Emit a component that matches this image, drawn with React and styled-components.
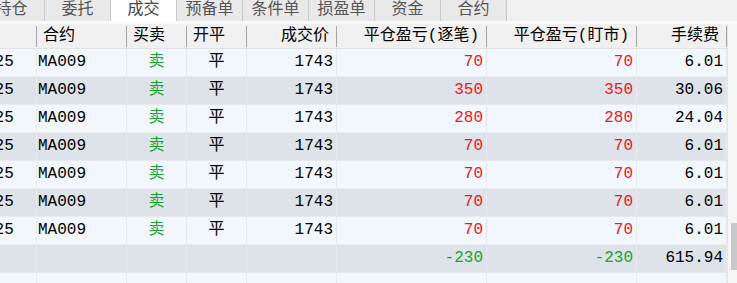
import React from 'react';
import styled, { createGlobalStyle } from 'styled-components';

const GlobalStyle = createGlobalStyle`
  html, body {
    margin: 0;
    padding: 0;
    background: #ffffff;
    overflow: hidden;
  }
  body {
    font-family: "Liberation Mono", "Noto Sans CJK SC", monospace;
    font-size: 16px;
  }
`;

const tabs = ['持仓', '委托', '成交', '预备单', '条件单', '损盈单', '资金', '合约'];

const columns = [
  { title: '时间', align: 'left' },
  { title: '合约', align: 'left' },
  { title: '买卖', align: 'left' },
  { title: '开平', align: 'left' },
  { title: '成交价', align: 'right' },
  { title: '平仓盈亏(逐笔)', align: 'right' },
  { title: '平仓盈亏(盯市)', align: 'right' },
  { title: '手续费', align: 'right' },
];

const trades = [
  { time: '14:30:25', profit: 70, fee: '6.01' },
  { time: '14:30:25', profit: 350, fee: '30.06' },
  { time: '14:30:25', profit: 280, fee: '24.04' },
  { time: '14:30:25', profit: 70, fee: '6.01' },
  { time: '14:30:25', profit: 70, fee: '6.01' },
  { time: '14:30:25', profit: 70, fee: '6.01' },
  { time: '14:30:25', profit: 70, fee: '6.01' },
];

const GRID = '100px 90px 60px 60px 90px 150px 150px 90px';

const Page = styled.div`
  width: 737px;
  height: 283px;
  display: flex;
  flex-direction: column;
  overflow: hidden;
`;

const TabBar = styled.div`
  height: 21px;
  display: flex;
  background: #f0f0f0;
  overflow: hidden;
  flex-shrink: 0;
`;

const TabStrip = styled.div`
  display: flex;
  margin-left: -21px;
`;

const Tab = styled.div`
  width: 66px;
  height: 21px;
  line-height: 21px;
  text-align: center;
  color: ${(props) => (props.active ? '#444' : '#555')};
  background: ${(props) => (props.active ? '#ffffff' : '#e9e9e9')};
  border-right: 1px solid #c9c9c9;
  box-sizing: border-box;
  font-size: 16px;
`;

const Gap = styled.div`
  height: 3px;
  background: #fafafa;
  flex-shrink: 0;
`;

const Body = styled.div`
  flex: 1;
  display: flex;
  min-height: 0;
`;

const TableView = styled.div`
  width: 727px;
  overflow: hidden;
`;

const Table = styled.div`
  margin-left: -63px;
  width: 790px;
`;

const HeaderRow = styled.div`
  display: grid;
  grid-template-columns: ${GRID};
  height: 25px;
  background: #f0f0f0;
  border-bottom: 1px solid #e2e2e2;
  box-sizing: border-box;
`;

const HeaderCell = styled.div`
  position: relative;
  line-height: 24px;
  color: #000;
  text-align: ${(props) => props.align};
  padding: ${(props) => (props.align === 'right' ? '0 8px 0 0' : '0 0 0 6px')};
  white-space: nowrap;
  overflow: hidden;

  &::after {
    content: '';
    position: absolute;
    right: 0;
    top: 2px;
    bottom: 1px;
    width: 1px;
    background: #a4a4a4;
  }
`;

const Row = styled.div`
  display: grid;
  grid-template-columns: ${GRID};
  height: 28px;
  background: ${(props) => (props.dark ? '#dee2e9' : '#f1f7fd')};
  border-bottom: 1px solid ${(props) => (props.dark ? '#e6eaf0' : '#eaeef3')};
  box-sizing: border-box;
`;

const Cell = styled.div`
  line-height: 27px;
  white-space: nowrap;
  overflow: hidden;
  border-right: 1px solid #e7e9ec;
  text-align: ${(props) => props.align || 'left'};
  padding: ${(props) =>
    props.align === 'right' ? '0 3px 0 0' : props.align === 'center' ? '0' : '0 0 0 1px'};
  color: ${(props) => props.color || '#000'};
`;

const TimeCell = styled(Cell)`
  padding-right: 23px;
`;

const ScrollTrack = styled.div`
  width: 10px;
  display: flex;
  flex-direction: column;
  justify-content: flex-end;
  align-items: flex-end;
  padding-bottom: 13px;
  background: #f5f5f5;
  border-left: 1px solid #e4e4e4;
  box-sizing: border-box;
`;

const ScrollThumb = styled.div`
  width: 6px;
  height: 47px;
  background: #c8c8c8;
`;

const RED = '#f01818';
const GREEN = '#1aa32a';

export default function App() {
  return (
    <Page>
      <GlobalStyle />
      <TabBar>
        <TabStrip>
          {tabs.map((t) => (
            <Tab key={t} active={t === '成交'}>
              {t}
            </Tab>
          ))}
        </TabStrip>
      </TabBar>
      <Gap />
      <Body>
        <TableView>
          <Table>
            <HeaderRow>
              {columns.map((c) => (
                <HeaderCell key={c.title} align={c.align}>
                  {c.title}
                </HeaderCell>
              ))}
            </HeaderRow>
            {trades.map((t, i) => (
              <Row key={i} dark={i % 2 === 1}>
                <TimeCell align="right">{t.time}</TimeCell>
                <Cell>MA009</Cell>
                <Cell align="center" color={GREEN}>
                  卖
                </Cell>
                <Cell align="center">平</Cell>
                <Cell align="right">1743</Cell>
                <Cell align="right" color={RED}>
                  {t.profit}
                </Cell>
                <Cell align="right" color={RED}>
                  {t.profit}
                </Cell>
                <Cell align="right">{t.fee}</Cell>
              </Row>
            ))}
            <Row dark>
              <Cell />
              <Cell />
              <Cell />
              <Cell />
              <Cell />
              <Cell align="right" color={GREEN}>
                -230
              </Cell>
              <Cell align="right" color={GREEN}>
                -230
              </Cell>
              <Cell align="right">615.94</Cell>
            </Row>
            <Row>
              <Cell />
              <Cell />
              <Cell />
              <Cell />
              <Cell />
              <Cell />
              <Cell />
              <Cell />
            </Row>
          </Table>
        </TableView>
        <ScrollTrack>
          <ScrollThumb />
        </ScrollTrack>
      </Body>
    </Page>
  );
}
